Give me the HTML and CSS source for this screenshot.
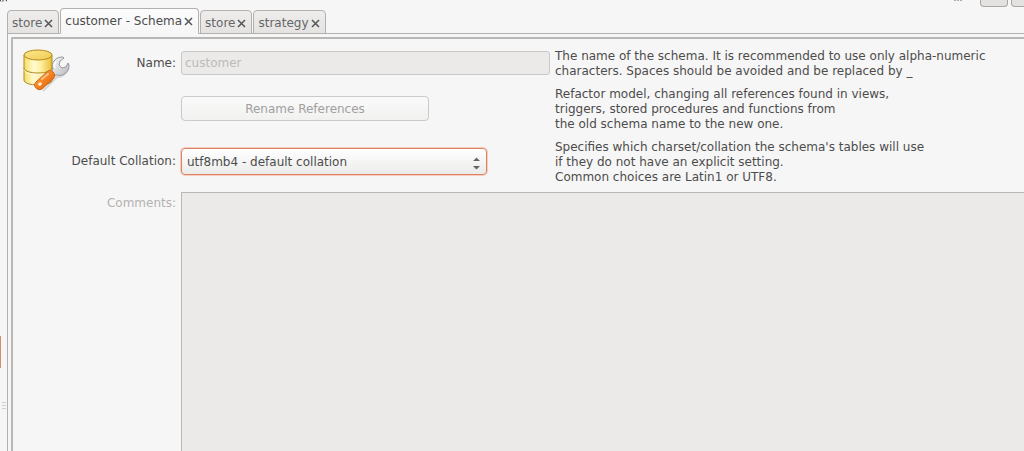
FILE: index.html
```
<!DOCTYPE html>
<html lang="en">
<head>
  <meta charset="UTF-8">
  <title>Schema Editor</title>
  <link rel="stylesheet" href="styles.css">
</head>
<body>

  <div class="sidebar">
    <div class="sidebar-edge"></div>
    <div class="grip"><i></i><i></i><i></i></div>
  </div>

  <div class="main">
    <div class="toolbar">
      <svg class="tool-mark" width="7" height="2" viewBox="0 0 7 2"><path d="M0 0l1 1.500M3 0v1.500M6 0l1 1.500" stroke="#333" fill="none"/></svg>
      <span class="dots"><i></i><i></i><i></i></span>
      <button class="tool-button" aria-label="Toggle sidebar"></button>
      <button class="tool-button" aria-label="Toggle output"></button>
    </div>

    <div class="tabs">
      <button class="tab">store<svg class="close" viewBox="0 0 9 9"><path d="M1 1l7 7M8 1l-7 7"/></svg></button>
      <button class="tab active">customer - Schema<svg class="close" viewBox="0 0 9 9"><path d="M1 1l7 7M8 1l-7 7"/></svg></button>
      <button class="tab">store<svg class="close" viewBox="0 0 9 9"><path d="M1 1l7 7M8 1l-7 7"/></svg></button>
      <button class="tab">strategy<svg class="close" viewBox="0 0 9 9"><path d="M1 1l7 7M8 1l-7 7"/></svg></button>
    </div>

    <div class="page">
      <form class="editor">
        <svg class="schema-icon" width="48" height="46" viewBox="0 0 48 46">
          <defs>
            <linearGradient id="gold">
              <stop offset="0" stop-color="#f5dc62"/>
              <stop offset=".35" stop-color="#fffbd2"/>
              <stop offset=".6" stop-color="#fdf0a0"/>
              <stop offset="1" stop-color="#e9bd35"/>
            </linearGradient>
            <linearGradient id="lid" x2="1" y2="1">
              <stop offset="0" stop-color="#fbe98c"/>
              <stop offset="1" stop-color="#f0ca52"/>
            </linearGradient>
            <linearGradient id="steel" x2="1" y2="1">
              <stop offset="0" stop-color="#fff"/>
              <stop offset="1" stop-color="#b4b7bb"/>
            </linearGradient>
            <linearGradient id="handle" x2="1" y2="1">
              <stop offset="0" stop-color="#ffb066"/>
              <stop offset=".5" stop-color="#f58220"/>
              <stop offset="1" stop-color="#cf5506"/>
            </linearGradient>
          </defs>
          <path d="M2 7v25c0 3 6 5 14 5s14-2 14-5V7z" fill="url(#gold)" stroke="#b28a1c"/>
          <path d="M2 20c0 3 6 5 14 5s14-2 14-5" fill="none" stroke="#b28a1c"/>
          <path d="M2 21.500c0 3 6 5 14 5s14-2 14-5" fill="none" stroke="#fffbe0"/>
          <ellipse cx="16" cy="7" rx="14" ry="5" fill="url(#lid)" stroke="#b28a1c"/>
          <path d="M21 43l14-14c5 0 9-3 12-9" fill="none" stroke="#888" stroke-width="2" opacity=".3"/>
          <path d="M28 25l3-4c-1-3-1-6 1-8 2-3 5-4 9-4l1 1-4 3-1 4 3 3 4-1 2-4 1 2c0 5-3 9-7 10-2 1-4 0-6 0l-3 2z" fill="url(#steel)" stroke="#94989d"/>
          <path d="M34 14c-2 2-2 4-1 6" fill="none" stroke="#fff" stroke-width="1.500"/>
          <path d="M14 34l12-11c2-1 3-1 5 1s2 4 1 6L20 41c-2 1-4 1-6-1s-2-4 0-6z" fill="url(#handle)" stroke="#c76520"/>
          <path d="M20 31l6-5" stroke="#ffd5ab" stroke-width="2" stroke-linecap="round" opacity=".7"/>
          <ellipse cx="18" cy="36" rx="2" ry="1.500" transform="rotate(-40 18 36)" fill="#fff0dd"/>
        </svg>

        <label class="label" for="name">Name:</label>
        <input class="name-field" type="text" id="name" value="customer" disabled>
        <p class="help">The name of the schema. It is recommended to use only alpha-numeric<br>characters. Spaces should be avoided and be replaced by _</p>

        <button class="rename" type="button" disabled>Rename References</button>
        <p class="help">Refactor model, changing all references found in views,<br>triggers, stored procedures and functions from<br>the old schema name to the new one.</p>

        <label class="label" for="collation">Default Collation:</label>
        <div class="select-box">
          <select id="collation">
            <option>utf8mb4 - default collation</option>
          </select>
          <svg class="arrows" width="7" height="14" viewBox="0 0 7 14"><path d="M0 5h7L3.500 1.500zM0 10h7l-3.500 3.500z"/></svg>
        </div>
        <p class="help">Specifies which charset/collation the schema's tables will use<br>if they do not have an explicit setting.<br>Common choices are Latin1 or UTF8.</p>

        <label class="label comments-label" for="comments">Comments:</label>
        <textarea class="comments" id="comments" disabled></textarea>
      </form>
    </div>
  </div>

</body>
</html>
```
FILE: styles.css
```
* {
  box-sizing: border-box;
}
body {
  margin: 0;
  height: 100vh;
  display: flex;
  overflow: hidden;
  background: #f7f6f6;
  color: #4c4c4c;
  font: 12px/15px "DejaVu Sans", sans-serif;
}
button, input, select, textarea {
  font: inherit;
  color: inherit;
  margin: 0;
}

/* edge of the left pane with the splitter grip */
.sidebar {
  flex: none;
  width: 7px;
  padding-top: 300px;
}
.sidebar-edge {
  width: 1px;
  height: 68px;
  padding-top: 36px;
  background: #d88a6c content-box;
}
.grip {
  display: grid;
  gap: 2px;
  margin: 34px 1px 0 2px;
}
.grip i {
  height: 1px;
  background: #cfcfcf;
}

.main {
  flex: 1;
  min-width: 0;
  display: flex;
  flex-direction: column;
}
.toolbar {
  display: flex;
  align-items: flex-start;
  height: 8px;
  gap: 3px;
  margin-left: -7px;
  overflow: hidden;
}
.tool-mark {
  margin-right: auto;
}
.dots {
  display: flex;
  gap: 1px;
  margin-right: 15px;
}
.dots i {
  width: 2px;
  height: 1px;
  background: #aaa;
}
.tool-button {
  width: 28px;
  height: 7px;
  padding: 0;
  background: #e3e2e0;
  border: 1px solid #a9a8a6;
  border-top: 0;
  border-radius: 0 0 4px 4px;
}
.tool-button:last-child {
  width: 13px;
  border-right: 0;
  border-radius: 0 0 0 4px;
}

.tabs {
  display: flex;
  align-items: flex-end;
  gap: 1px;
  height: 26px;
  margin-bottom: -1px;
  z-index: 1;
}
.tab {
  display: flex;
  align-items: center;
  gap: 2px;
  height: 24px;
  padding: 2px 5px 0 4px;
  color: #666;
  background: linear-gradient(#eeedec, #e4e3e2);
  border: 1px solid #b3b1af;
  border-radius: 4px 4px 0 0;
  white-space: nowrap;
}
.tab.active {
  height: 26px;
  padding-top: 1px;
  color: #4c4c4c;
  background: linear-gradient(#fcfcfc, #f7f6f6);
  border-bottom-color: #f7f6f6;
}
.close {
  width: 9px;
  height: 9px;
  fill: none;
  stroke: #555;
  stroke-width: 1.500;
}

.page {
  flex: 1;
  min-height: 0;
  display: flex;
  padding: 3px 0 0 3px;
  border: 1px solid #b3b1af;
  border-width: 1px 0 0 1px;
}
.editor {
  flex: 1;
  min-width: 0;
  display: grid;
  grid-template-columns: 47px 102px 369px 1fr;
  grid-template-rows: auto auto auto 1fr;
  gap: 8px 5px;
  align-items: center;
  padding: 9px 0 0 9px;
  border: 2px solid #b8b7b6;
  border-width: 2px 0 0 2px;
  border-radius: 2px 0 0 0;
}
.schema-icon {
  grid-row: 1 / 4;
  align-self: start;
}
.label {
  grid-column: 2;
  justify-self: end;
  white-space: nowrap;
}
.help {
  margin: 0 0 -1px;
  padding-top: 1px;
  white-space: nowrap;
}
.name-field {
  width: 100%;
  height: 24px;
  padding: 0 3px;
  color: #bcbbb9;
  background: #ebeae9;
  border: 1px solid #c9c8c8;
  border-radius: 3px;
}
.rename {
  grid-column: 3;
  width: 248px;
  height: 25px;
  padding: 1px 0 0;
  color: #a0a09f;
  background: linear-gradient(#fafafa, #f1f1f0);
  border: 1px solid #cbcacb;
  border-radius: 4px;
}
.select-box {
  position: relative;
  width: 306px;
}
.select-box select {
  display: block;
  width: 100%;
  height: 27px;
  padding: 1px 24px 0 5px;
  appearance: none;
  background: linear-gradient(#fff, #ebebea);
  border: 1px solid #dc8265;
  border-radius: 4px;
  box-shadow: 0 0 0 1px #f4cdbf;
  outline: 0;
}
.arrows {
  position: absolute;
  right: 7px;
  top: 8px;
  fill: #666;
  pointer-events: none;
}
.comments-label {
  align-self: start;
  padding-top: 4px;
  color: #b3b2b1;
}
.comments {
  grid-column: 3 / 5;
  align-self: stretch;
  display: block;
  width: 100%;
  resize: none;
  background: #ebeae9;
  border: 1px solid #b9b8b7;
  border-width: 1px 0 0 1px;
  border-radius: 0;
}
```
